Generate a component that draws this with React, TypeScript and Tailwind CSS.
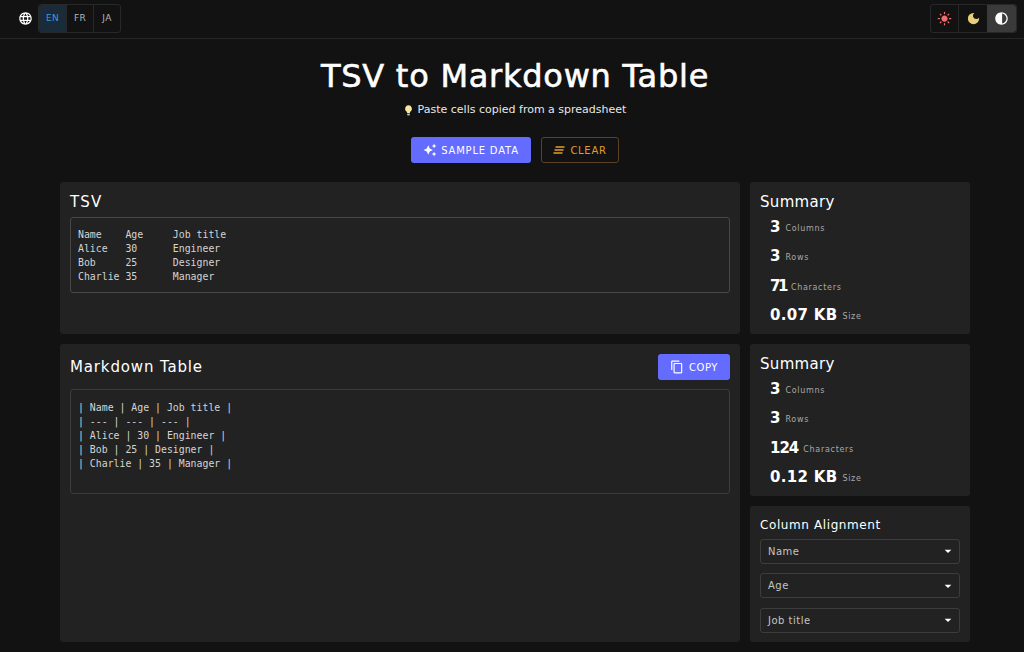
import React from "react";
import {
  MdArrowDropDown,
  MdAutoAwesome,
  MdContentCopy,
  MdContrast,
  MdDarkMode,
  MdLanguage,
  MdLightMode,
} from "react-icons/md";

const display = "font-['DejaVu_Sans',sans-serif]";
const mono = "font-['DejaVu_Sans_Mono',monospace]";

const tsv = `Name    Age     Job title
Alice   30      Engineer
Bob     25      Designer
Charlie 35      Manager`;

const markdown = `| Name | Age | Job title |
| --- | --- | --- |
| Alice | 30 | Engineer |
| Bob | 25 | Designer |
| Charlie | 35 | Manager |`;

type StatRow = { value: string; label: string; fit?: string };

function Stat({ value, label, fit = "" }: StatRow) {
  return (
    <div className="flex h-[29.3px] items-center gap-[5px] pl-[10px]">
      <span className={`text-[15px] leading-none font-bold text-white ${fit}`}>{value}</span>
      <span className="pt-[3px] text-[8px] leading-none tracking-[0.7px] text-[#a8a8a8]">{label}</span>
    </div>
  );
}

function Summary({ stats }: { stats: StatRow[] }) {
  return (
    <section className="flex h-[152px] flex-col rounded-[3px] bg-[#222222] px-[10px] pt-[10px]">
      <h2 className="mb-px text-[15px] leading-[20px] tracking-[0.3px] text-white">Summary</h2>
      {stats.map((stat) => (
        <Stat key={stat.label} {...stat} />
      ))}
    </section>
  );
}

function AlignSelect({ label }: { label: string }) {
  return (
    <div className="flex h-[25px] items-center justify-between rounded-[3px] border border-[#3d3d3d] pr-[3px] pl-[7px] text-[10px] tracking-[0.5px] text-[#c4c4c4]">
      <span>{label}</span>
      <MdArrowDropDown className="h-4 w-4 text-white" />
    </div>
  );
}

export default function App() {
  return (
    <div className={`h-[652px] overflow-hidden bg-[#121212] ${display}`}>
      <header className="flex h-[39px] items-start justify-between border-b border-[#262626] pt-1 pr-[7px] pl-[18px]">
        <div className="flex h-[29px] items-center gap-[5px]">
          <MdLanguage className="h-[15px] w-[15px] text-white" />
          <div className="flex h-[29px] rounded-[3px] border border-[#282828] text-[9px] tracking-[0.3px]">
            <span className="flex w-[27px] items-center justify-center rounded-l-[3px] bg-[#1a2c3a] text-[#3d9bd9]">EN</span>
            <span className="flex w-[27px] items-center justify-center border-l border-[#282828] text-[#b5b5b5]">FR</span>
            <span className="flex w-[27px] items-center justify-center border-l border-[#282828] text-[#b5b5b5]">JA</span>
          </div>
        </div>
        <div className="flex h-[29px] rounded-[3px] border border-[#282828]">
          <span className="flex w-[27px] items-center justify-center">
            <MdLightMode className="h-[15px] w-[15px] text-[#f26d6d]" />
          </span>
          <span className="flex w-[29px] items-center justify-center border-l border-[#282828]">
            <MdDarkMode className="h-[15px] w-[15px] text-[#e6cf78]" />
          </span>
          <span className="flex w-[29px] items-center justify-center rounded-r-[3px] bg-[#3a3a3a]">
            <MdContrast className="h-[15px] w-[15px] text-white" />
          </span>
        </div>
      </header>

      <div className="flex flex-col items-center pl-[6px]">
        <h1 className="mt-[18px] text-[32px] leading-[38px] tracking-[0.75px] text-white [-webkit-text-stroke:0.6px_white]">TSV to Markdown Table</h1>
        <p className="mt-2 flex h-[14px] items-center gap-[5px] text-[11px] text-[#e8e8e8]">
          <svg viewBox="0 0 12 16" className="h-[11px] w-[9px]">
            <path d="M6 0.5a5 5 0 0 0-3 9c.6.5 1 1.2 1 2h4c0-.8.4-1.5 1-2a5 5 0 0 0-3-9z" fill="#fbe6a0" />
            <rect x="4" y="12.2" width="4" height="3" rx="1" fill="#b9b9b9" />
          </svg>
          Paste cells copied from a spreadsheet
        </p>
        <div className="mt-5 flex gap-[10px]">
          <button className="flex h-[26px] w-[120px] items-center justify-center gap-1 rounded-[3px] bg-[#646cff] text-[10px] tracking-[0.8px] text-white">
            <MdAutoAwesome className="h-[14px] w-[14px]" />
            SAMPLE DATA
          </button>
          <button className="flex h-[26px] w-[78px] items-center justify-center gap-[5px] rounded-[3px] border border-[#5a4122] text-[10px] tracking-[0.7px] text-[#e39a2f]">
            <svg viewBox="0 0 12 8" className="h-2 w-3" fill="none" stroke="#e39a2f" strokeWidth="1.4">
              <path d="M2.5 1h9M1.5 4h9M.5 7h9" />
            </svg>
            CLEAR
          </button>
        </div>
      </div>

      <main className="mx-[60px] mt-[19px] grid grid-cols-[680px_220px] gap-[10px]">
        <div className="flex flex-col gap-[10px]">
          <section className="h-[152px] rounded-[3px] bg-[#222222] px-[10px] pt-[10px]">
            <h2 className="text-[15px] leading-[20px] tracking-[1.2px] text-white">TSV</h2>
            <pre className={`mt-[5px] h-[76px] rounded-[3px] border border-[#484848] px-[7px] pt-[10px] text-[9.85px] leading-[14px] text-[#d4d4d4] ${mono}`}>{tsv}</pre>
          </section>
          <section className="h-[298px] rounded-[3px] bg-[#222222] px-[10px] pt-[10px]">
            <div className="flex h-[26px] items-center justify-between">
              <h2 className="text-[15px] leading-[20px] tracking-[0.85px] text-white">Markdown Table</h2>
              <button className="flex h-[26px] w-[72px] items-center justify-center gap-[5px] rounded-[3px] bg-[#646cff] text-[10px] tracking-[0.5px] text-white">
                <MdContentCopy className="h-[14px] w-[14px]" />
                COPY
              </button>
            </div>
            <pre className={`mt-[9px] h-[105px] rounded-[3px] border border-[#3c3c3c] px-[7px] pt-[11px] text-[9.85px] leading-[14px] text-[#d4d4d4] ${mono}`}>{markdown}</pre>
          </section>
        </div>

        <aside className="flex flex-col gap-[10px]">
          <Summary
            stats={[
              { value: "3", label: "Columns" },
              { value: "3", label: "Rows" },
              { value: "71", label: "Characters", fit: "tracking-[-2.5px]" },
              { value: "0.07 KB", label: "Size", fit: "tracking-[0.3px]" },
            ]}
          />
          <Summary
            stats={[
              { value: "3", label: "Columns" },
              { value: "3", label: "Rows" },
              { value: "124", label: "Characters", fit: "tracking-[-1px]" },
              { value: "0.12 KB", label: "Size", fit: "tracking-[0.3px]" },
            ]}
          />
          <section className="flex h-[136px] flex-col gap-[9.5px] rounded-[3px] bg-[#222222] px-[10px] pt-[10px]">
            <h2 className="-mb-[5px] text-[12px] leading-[18px] tracking-[0.6px] text-white">Column Alignment</h2>
            <AlignSelect label="Name" />
            <AlignSelect label="Age" />
            <AlignSelect label="Job title" />
          </section>
        </aside>
      </main>
    </div>
  );
}
